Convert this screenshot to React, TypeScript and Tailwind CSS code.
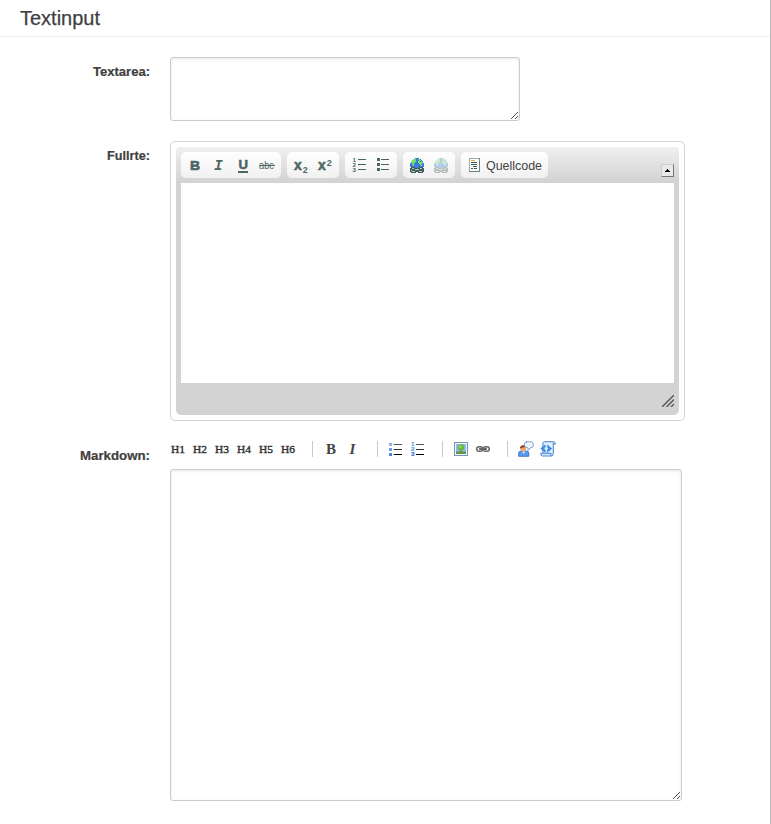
import React, { ReactNode } from "react";

const Label = ({ children, className = "", size }: { children: string; className?: string; size: number }) => (
  <div className={`w-[150px] shrink-0 text-right text-[13px] font-bold leading-5 ${className}`}>
    <svg className="inline-block h-5 overflow-visible align-top" width={size} height="20">
      <text x="0" y="15" textLength={size} lengthAdjust="spacingAndGlyphs" fill="#404040" stroke="#404040" strokeWidth=".2" fontSize="13" fontWeight="bold" fontFamily="Liberation Sans, sans-serif">{children}</text>
    </svg>
  </div>
);

const Grip = () => (
  <svg className="absolute right-0 bottom-0" width="9" height="9" shapeRendering="crispEdges">
    {[0, 1, 2, 3, 4, 5, 6].map((i) => <rect key={i} x={7 - i} y={i + 1} width="1" height="1" fill="#555" />)}
    {[0, 1, 2].map((i) => <rect key={i} x={7 - i} y={5 + i} width="1" height="1" fill="#555" />)}
  </svg>
);

const Field = ({ className }: { className: string }) => (
  <div className={`relative rounded-[3px] border border-[#ccc] bg-white shadow-[inset_0_1px_3px_rgba(0,0,0,0.1)] ${className}`}>
    <textarea className="block h-full w-full resize-none bg-transparent outline-none" />
    <Grip />
  </div>
);

const Group = ({ children }: { children: ReactNode }) => (
  <div className="flex h-[26px] items-center rounded-[5px] bg-gradient-to-b from-white to-[#f1f1f1] px-[2px]">{children}</div>
);

const Btn = ({ children }: { children: ReactNode }) => (
  <button className="flex h-[26px] w-6 items-center justify-center">
    <svg width="16" height="16" className="overflow-visible" fill="#4c6664">{children}</svg>
  </button>
);

const Pixels = ({ rows, colors }: { rows: string[]; colors: Record<string, string> }) => (
  <g shapeRendering="crispEdges">
    {rows.flatMap((row, y) =>
      row.split("").map((c, x) => (colors[c] ? <rect key={`${x}-${y}`} x={x} y={y} width="1" height="1" fill={colors[c]} /> : null))
    )}
  </g>
);

const globe = [
  "................",
  "......bbbb......",
  "....gggbbggb....",
  "...ggggbbbggb...",
  "..gggggbbggbgb..",
  "..ggggbbbggggg..",
  ".bbggbbbbbgggbb.",
  ".bbggbbbbbbggbb.",
  ".bbbgbbbbbbbgbb.",
  ".bbbbbbbbbbbbbb.",
  "..ddddbbbbdddd..",
  ".ddwwddddddwwdd.",
  ".dddddwwwwddddd.",
  ".dwdddddddddddd.",
  ".ddwwwddddwwwdd.",
  "..ddddd..ddddd..",
];
const globeColors = { b: "#4278da", g: "#6fe06c", d: "#3f5f5d", w: "#b4c4c2" };

const Md = ({ children }: { children: ReactNode }) => (
  <button className="h-4 w-4"><svg width="16" height="16" className="overflow-visible">{children}</svg></button>
);

const Separator = () => <i className="mr-1 ml-[10px] h-4 w-px bg-[#c8c8c8]" />;

const bullets = [3, 8, 13];

export default function App() {
  return (
    <main className="h-[824px] w-[771px] overflow-hidden border-r border-[#bbb] bg-white font-['Liberation_Sans',sans-serif] text-[#404040]">
      <header className="h-[37px] border-b border-[#eee] pl-5">
        <h1 className="h-9">
          <svg width="100" height="36"><text x="0" y="25" textLength="80" lengthAdjust="spacingAndGlyphs" fontSize="20" fill="#404040" stroke="#404040" strokeWidth=".25" fontFamily="Liberation Sans, sans-serif">Textinput</text></svg>
        </h1>
      </header>

      <section className="flex gap-5 pt-5">
        <Label size={57} className="pt-1">Textarea:</Label>
        <Field className="h-16 w-[350px]" />
      </section>

      <section className="flex gap-5 pt-5">
        <Label size={43} className="pt-1">Fullrte:</Label>
        <div className="h-[280px] w-[515px] rounded-[5px] border border-[#d3d3d3] p-[5px]">
          <div className="h-[268px] overflow-hidden rounded-[5px] bg-[#d3d3d3] px-[5px]">
            <div className="-mx-[5px] flex h-9 gap-[6px] bg-gradient-to-b from-[#f0f0f0] to-[#d2d2d2] px-[5px] pt-[5px]">
              <Group>
                <Btn><text x="3" y="12.5" fontSize="13.5" fontWeight="bold" stroke="#4c6664" strokeWidth=".7" textLength="10" lengthAdjust="spacingAndGlyphs">B</text></Btn>
                <Btn><text x="3" y="12.5" fontSize="14.5" fontWeight="bold" fontStyle="italic" fontFamily="Liberation Mono, monospace">I</text></Btn>
                <Btn><text x="3.5" y="12" fontSize="12.5" fontWeight="bold" stroke="#4c6664" strokeWidth=".5" textLength="9.5" lengthAdjust="spacingAndGlyphs">U</text><rect x="3" y="14" width="10" height="2" shapeRendering="crispEdges" /></Btn>
                <Btn><text x="0" y="12" fontSize="10" textLength="15" lengthAdjust="spacingAndGlyphs">abc</text><path d="M0 8h16v1H0z" shapeRendering="crispEdges" /></Btn>
              </Group>
              <Group>
                <Btn><text x="1" y="13" fontSize="14" fontWeight="bold" stroke="#4c6664" strokeWidth=".5">x</text><text x="9.7" y="15.5" fontSize="9" fontWeight="bold">2</text></Btn>
                <Btn><text x="1" y="13" fontSize="14" fontWeight="bold" stroke="#4c6664" strokeWidth=".5">x</text><text x="9.7" y="9" fontSize="9" fontWeight="bold">2</text></Btn>
              </Group>
              <Group>
                <Btn>
                  {["1", "2", "3"].map((n, i) => <text key={n} x="1.5" y={5 + i * 5} fontSize="5" fontWeight="bold" textLength="3.5" lengthAdjust="spacingAndGlyphs">{n}</text>)}
                  <path d="M7 2h8v1H7zM7 7h8v1H7zM7 12h8v1H7z" shapeRendering="crispEdges" />
                </Btn>
                <Btn><path d="M2 1h3v3H2zM2 6h3v3H2zM2 11h3v3H2zM6 2h8v1H6zM6 7h8v1H6zM6 12h8v1H6z" shapeRendering="crispEdges" /></Btn>
              </Group>
              <Group>
                <Btn><Pixels rows={globe} colors={globeColors} /></Btn>
                <Btn><g opacity=".35"><Pixels rows={globe} colors={globeColors} /></g></Btn>
              </Group>
              <Group>
                <button className="flex h-[26px] w-[83px] items-center pl-1">
                  <svg width="16" height="16" shapeRendering="crispEdges">
                    <path d="M2.5 1.5h10v13h-10z" fill="#fff" stroke="#9caaa9" />
                    <path d="M12.5 1v13.5H2" fill="none" stroke="#6c8180" />
                    <path d="M4 3h4v1H4z" fill="#f4a623" />
                    <path d="M4 5h6v1H4zM4 7h6v1H4zM6 9h4v1H6zM4 11h2v1H4zM7 11h3v1H7z" fill="#335957" />
                  </svg>
                  <svg className="ml-0.5 overflow-visible" width="56" height="20"><text x="1" y="14.5" textLength="56" lengthAdjust="spacingAndGlyphs" fontSize="12.5" fill="#444">Quellcode</text></svg>
                </button>
              </Group>
              <button className="mt-3 ml-auto h-[13px] w-[13px] border border-t-[#ccc] border-r-[#777] border-b-[#777] border-l-[#ccc] bg-[#e9e9e9]">
                <svg width="11" height="11" shapeRendering="crispEdges"><path d="M5 4h1v1H5zM4 5h3v1H4zM3 6h5v1H3z" /></svg>
              </button>
            </div>
            <div className="h-[200px] bg-white" />
            <svg className="mt-3 ml-auto" width="12" height="12"><path d="M0 12L12 0M4.5 12L12 4.5M9 12L12 9" stroke="#555" strokeWidth="1.4" /></svg>
          </div>
        </div>
      </section>

      <section className="flex gap-5 pt-5">
        <Label size={70} className="pt-1">Markdown:</Label>
        <div>
          <div className="flex h-7 gap-[6px]">
            {["H1", "H2", "H3", "H4", "H5", "H6"].map((h) => (
              <Md key={h}><text x="1" y="12" textLength="14" lengthAdjust="spacingAndGlyphs" fontSize="11" fill="#333" stroke="#333" strokeWidth=".4" fontFamily="Liberation Serif, serif">{h}</text></Md>
            ))}
            <Separator />
            <Md><text x="3" y="13" fontSize="15" fontWeight="bold" fill="#444" fontFamily="Liberation Serif, serif">B</text></Md>
            <Md><text x="4.5" y="13" fontSize="15" fontWeight="bold" fontStyle="italic" fill="#444" fontFamily="Liberation Serif, serif">I</text></Md>
            <Separator />
            <Md>
              <g shapeRendering="crispEdges">
                {bullets.map((y, i) => <g key={y}><rect x="1" y={y - 1} width="3" height="3" fill={["#8bb5ef", "#6c9de5", "#4c83dc"][i]} /><rect x="6" y={y} width="8" height="1" fill={["#555", "#333", "#000"][i]} /><rect x="5" y={y} width="1" height="1" fill="#aaa" /></g>)}
              </g>
            </Md>
            <Md>
              {bullets.map((y, i) => <g key={y}><text x="1" y={y + 2} fontSize="5" fontWeight="bold" textLength="3.5" lengthAdjust="spacingAndGlyphs" stroke={["#72a4ec", "#5a93e3", "#3f79d5"][i]} strokeWidth=".2" fill={["#72a4ec", "#5a93e3", "#3f79d5"][i]}>{i + 1}</text><rect x="6" y={y} width="8" height="1" fill={["#555", "#333", "#000"][i]} shapeRendering="crispEdges" /></g>)}
            </Md>
            <Separator />
            <Md>
              <rect x="1.5" y="1.5" width="13" height="13" fill="#f4f7fa" stroke="#7894b4" />
              <path d="M3 3h10v10H3z" fill="#8abcf0" />
              <path d="M3 10.5h10V13H3z" fill="#5f9b3e" />
              <path d="M7.3 8h1.6v4H7.3z" fill="#9b7945" />
              <circle cx="8" cy="6.5" r="3.2" fill="#65b743" /><circle cx="7.3" cy="5.7" r="1.5" fill="#8dd464" />
            </Md>
            <Md>
              <g fill="none" stroke="#666" strokeWidth="1.5"><rect x="1.7" y="5.7" width="6" height="4.6" rx="2.3" /><rect x="8.3" y="5.7" width="6" height="4.6" rx="2.3" /></g>
              <path d="M4 8h8" stroke="#999" strokeWidth="2.4" /><path d="M4.5 8h7" stroke="#333" />
            </Md>
            <Separator />
            <Md>
              <path d="M.7 15.3V12q0-2 2.5-2h4.6q3 0 3 2v3.3z" fill="#5a9df0" stroke="#2863b9" strokeWidth=".8" />
              <path d="M4 10.3L5.7 13l1.8-2.7z" fill="#c9e4ff" />
              <circle cx="5.2" cy="7.4" r="2.9" fill="#efa66b" />
              <path d="M2.1 7.7C1 4 7.5 2.8 8.3 6L6 6.2 3 7z" fill="#8a431d" />
              <path d="M8 1Q15.5-.5 15.5 4 15.4 6.8 12 7L10 9.5V7Q6.7 6.7 6.3 4 6.3 1 9 .8z" fill="#edf5fe" stroke="#7596c4" strokeWidth=".9" />
            </Md>
            <Md>
              <path d="M4.5.7h9q2 .3 2 2.5h-2.2v9.5q0 2-2 2.3H2.5Q.7 14.8.7 12.2h2.2V2.6Q3 .9 4.5.7z" fill="#d6e9fd" stroke="#4b83ce" />
              <path d="M5 2h7v9H5z" fill="#e3f0fe" /><path d="M13.3 3V1.8M3 12.3h8v2.4" fill="none" stroke="#4b83ce" />
              <path d="M5.2 4L.7 7.6l4.5 3.6V9L4 7.6 5.2 6zM7.3 4l4.5 3.6-4.5 3.6V9l1.2-1.4L7.3 6z" fill="#3c8bea" stroke="#3c8bea" strokeWidth=".7" />
            </Md>
          </div>
          <Field className="h-[332px] w-[512px]" />
        </div>
      </section>
    </main>
  );
}
